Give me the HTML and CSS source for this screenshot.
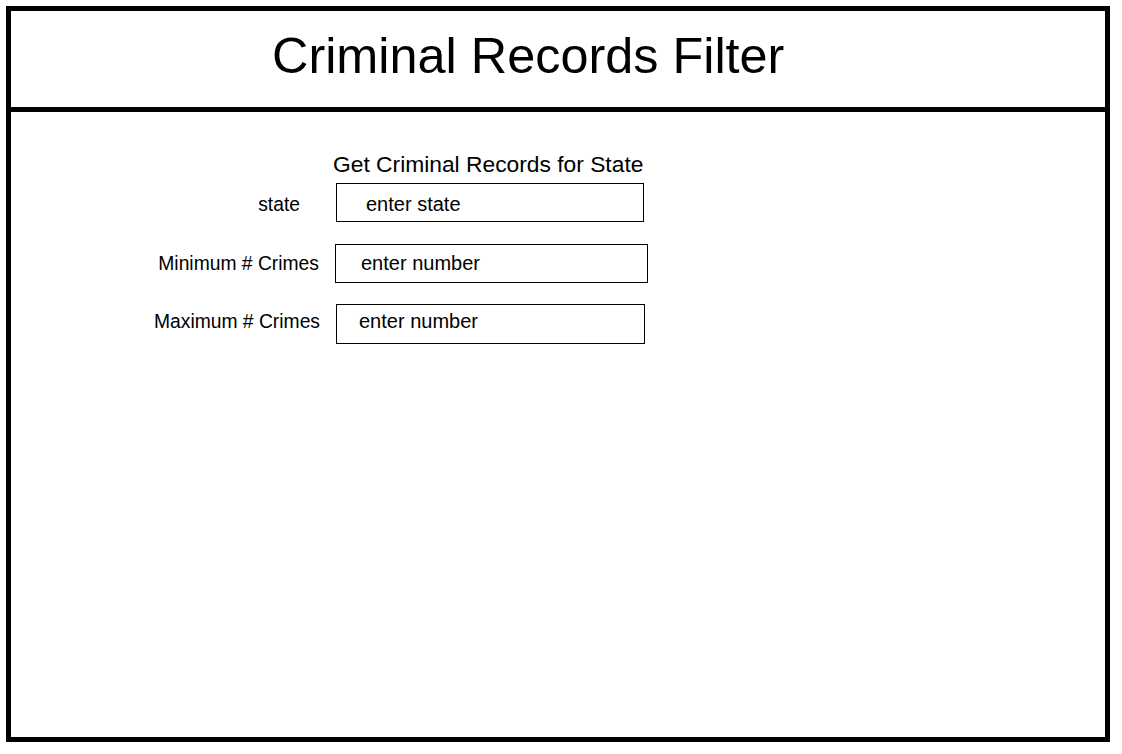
FILE: index.html
```html
<!DOCTYPE html>
<html lang="en">
<head>
<meta charset="utf-8">
<title>Criminal Records Filter</title>
<link rel="stylesheet" href="styles.css">
</head>
<body>
<div class="frame">
  <header class="header">
    <h1 class="title">Criminal Records Filter</h1>
  </header>
  <main class="content">
    <h2 class="subtitle">Get Criminal Records for State</h2>
    <div class="row row-state">
      <label class="label">state</label>
      <div class="box">enter state</div>
    </div>
    <div class="row row-min">
      <label class="label">Minimum # Crimes</label>
      <div class="box">enter number</div>
    </div>
    <div class="row row-max">
      <label class="label">Maximum # Crimes</label>
      <div class="box">enter number</div>
    </div>
  </main>
</div>
</body>
</html>
```

FILE: styles.css
```css
* {
  box-sizing: border-box;
}

html, body {
  margin: 0;
  padding: 0;
  background: #ffffff;
}

body {
  font-family: "Liberation Sans", Arial, sans-serif;
  color: #000000;
}

.frame {
  margin: 6px 0 0 6px;
  width: 1104px;
  height: 736px;
  border: 5px solid #000000;
  display: flex;
  flex-direction: column;
}

.header {
  height: 101px;
  border-bottom: 5px solid #000000;
  padding: 20px 0 0 261px;
  flex: none;
}

.title {
  margin: 0;
  font-size: 50.4px;
  font-weight: normal;
  line-height: 50px;
}

.content {
  padding: 39px 0 0 129px;
}

.subtitle {
  margin: 0 0 0 193px;
  font-size: 22.8px;
  font-weight: normal;
  line-height: 26px;
}

.row {
  display: flex;
  align-items: baseline;
}

.label {
  width: 180px;
  text-align: right;
  font-size: 19.3px;
  line-height: 22px;
  flex: none;
}

.box {
  margin-left: 16px;
  border: 1px solid #000000;
  height: 39px;
  font-size: 20px;
  line-height: 22px;
  flex: none;
}

.row-state {
  margin-top: 6px;
}

.row-state .label {
  padding-right: 20px;
}

.row-state .box {
  width: 308px;
  padding: 9px 0 0 29px;
}

.row-min {
  margin-top: 22px;
}

.row-min .label {
  padding-right: 1px;
}

.row-min .box {
  margin-left: 15px;
  width: 313px;
  padding: 7px 0 0 25px;
}

.row-max {
  margin-top: 21px;
}

.row-max .box {
  width: 309px;
  height: 40px;
  padding: 5px 0 0 22px;
}
```
